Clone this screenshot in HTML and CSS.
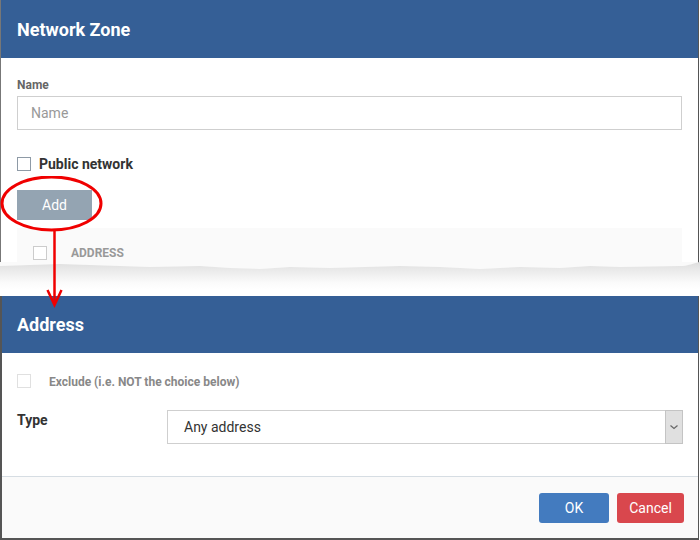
FILE: index.html
```html
<!DOCTYPE html>
<html>
<head>
<meta charset="utf-8">
<link rel="stylesheet" href="styles.css">
</head>
<body>
<div class="page">
  <section class="panel panel-top">
    <header class="panel-head">Network Zone</header>
    <div class="panel-body">
      <label class="field-label">Name</label>
      <div class="input"><span class="placeholder">Name</span></div>
      <div class="check-row">
        <span class="checkbox"></span>
        <span class="check-text">Public network</span>
      </div>
      <button class="btn btn-add">Add</button>
      <div class="table-head">
        <span class="checkbox"></span>
        <span class="col-title">ADDRESS</span>
      </div>
    </div>
  </section>
  <svg class="torn" width="700" height="34" viewBox="0 0 700 34" preserveAspectRatio="none">
    <defs>
      <linearGradient id="shade" x1="0" y1="0" x2="0" y2="1">
        <stop offset="0" stop-color="#dedede"/>
        <stop offset="0.35" stop-color="#ececec"/>
        <stop offset="0.75" stop-color="#fbfbfb"/>
        <stop offset="1" stop-color="#ffffff"/>
      </linearGradient>
    </defs>
    <path d="M0 0 L700 0 C690 2 688 4 680 4 L620 5 L590 4 L560 6 L520 5 L480 7 L440 5 L400 4 L330 6 L290 5 L260 7 L230 6 L200 4 L150 5 L120 4 L90 3 L60 2 L30 3 L0 4 Z" fill="#fafafa"/>
    <path d="M0 4 L30 3 L60 2 L90 3 L120 4 L150 5 L200 4 L230 6 L260 7 L290 5 L330 6 L400 4 L440 5 L480 7 L520 5 L560 6 L590 4 L620 5 L680 4 C688 4 690 2 700 0 L700 28 L0 28 Z" fill="url(#shade)"/>
  </svg>
  <svg class="marker" width="120" height="140" viewBox="0 0 120 140">
    <ellipse cx="51.5" cy="27.5" rx="49.5" ry="26.5" fill="none" stroke="#f00000" stroke-width="3"/>
    <line x1="54.5" y1="54" x2="54.5" y2="128" stroke="#f00000" stroke-width="2.5"/>
    <polyline points="47.5,114 54.5,129 61.5,114" fill="none" stroke="#f00000" stroke-width="2.5"/>
  </svg>
  <section class="panel panel-bottom">
    <header class="panel-head">Address</header>
    <div class="panel-body body-address">
      <div class="check-row exclude-row">
        <span class="checkbox light"></span>
        <span class="exclude-text">Exclude (i.e. NOT the choice below)</span>
      </div>
      <div class="type-row">
        <span class="type-label">Type</span>
        <div class="select">
          <span class="select-value">Any address</span>
          <span class="select-btn">
            <svg width="10" height="6" viewBox="0 0 10 6"><polyline points="1.5,1.5 5,4.5 8.5,1.5" fill="none" stroke="#666" stroke-width="1.2"/></svg>
          </span>
        </div>
      </div>
    </div>
    <footer class="panel-foot">
      <button class="btn btn-ok">OK</button>
      <button class="btn btn-cancel">Cancel</button>
    </footer>
  </section>
</div>
</body>
</html>
```
FILE: styles.css
```css
* { box-sizing: border-box; }
html, body { margin: 0; padding: 0; background: #ffffff; }
body { font-family: Roboto, "Liberation Sans", sans-serif; width: 700px; height: 540px; overflow: hidden; }
.page { position: relative; width: 700px; }

.panel { width: 699px; border-left: 1px solid #555; border-right: 1px solid #555; background: #fff; }
.panel-head {
  height: 58px; background: #355f96; color: #fff;
  font-size: 18px; font-weight: 700; padding-left: 16px;
  display: flex; align-items: center;
}
.panel-top { height: 264px; overflow: hidden; border-left-color: #777; }
.panel-top .panel-body { padding: 20px 16px 0 16px; }
.field-label { display: block; font-size: 12px; font-weight: 700; color: #666; line-height: 14px; }
.input {
  margin-top: 4px; height: 34px; border: 1px solid #cfcfcf;
  display: flex; align-items: center; padding-left: 13px;
}
.placeholder { font-size: 14px; color: #999; }
.check-row { display: flex; align-items: center; }
.panel-top .check-row { margin-top: 24px; height: 20px; }
.checkbox { width: 14px; height: 14px; border: 1px solid #8e9aa6; background: #fff; flex: none; }
.check-text { margin-left: 8px; font-size: 14px; font-weight: 700; color: #333; }
.btn { border: none; color: #fff; font-family: inherit; font-size: 14px; padding: 0; border-radius: 0; }
.btn-add { display: block; margin-top: 16px; width: 75px; height: 30px; background: #94a4b2; }
.table-head {
  margin-top: 8px; height: 60px; background: #fafafa; width: 665px;
  display: flex; align-items: flex-start; padding: 18px 0 0 16px;
}
.table-head .checkbox { border-color: #ccc; }
.col-title { margin-left: 24px; font-size: 12px; font-weight: 700; color: #999; line-height: 14px; margin-top: 0; }

.torn { display: block; margin-top: -2px; }

.marker { position: absolute; left: 0; top: 176px; }

.panel-bottom { border-bottom: 2px solid #555; border-left-width: 2px; }
.panel-bottom .panel-head { height: 57px; padding-left: 15px; }
.body-address { padding: 21px 15px 32px 15px; }
.exclude-row { height: 14px; }
.checkbox.light { border-color: #e0e0e0; }
.exclude-text { margin-left: 18px; font-size: 12px; font-weight: 700; color: #888; margin-top: 2px; }
.type-row { display: flex; align-items: flex-start; margin-top: 22px; }
.type-label { width: 150px; font-size: 14px; font-weight: 700; color: #333; padding-top: 2px; }
.select {
  width: 516px; height: 34px; border: 1px solid #cfcfcf;
  display: flex; align-items: center; justify-content: space-between;
}
.select-value { padding-left: 16px; font-size: 14px; color: #333; }
.select-btn {
  width: 18px; height: 34px; margin: -1px -1px -1px 0; background: #e0e0e0; border: 1px solid #c4c4c4;
  display: flex; align-items: center; justify-content: center;
}
.panel-foot {
  border-top: 1px solid #d6dde3; background: #fafafa; height: 62px;
  display: flex; justify-content: flex-end; align-items: center; gap: 8px; padding-right: 14px;
}
.btn-ok { width: 70px; height: 30px; background: #437bbf; border-radius: 3px; }
.btn-cancel { width: 67px; height: 30px; background: #d9474d; border-radius: 3px; }
```
